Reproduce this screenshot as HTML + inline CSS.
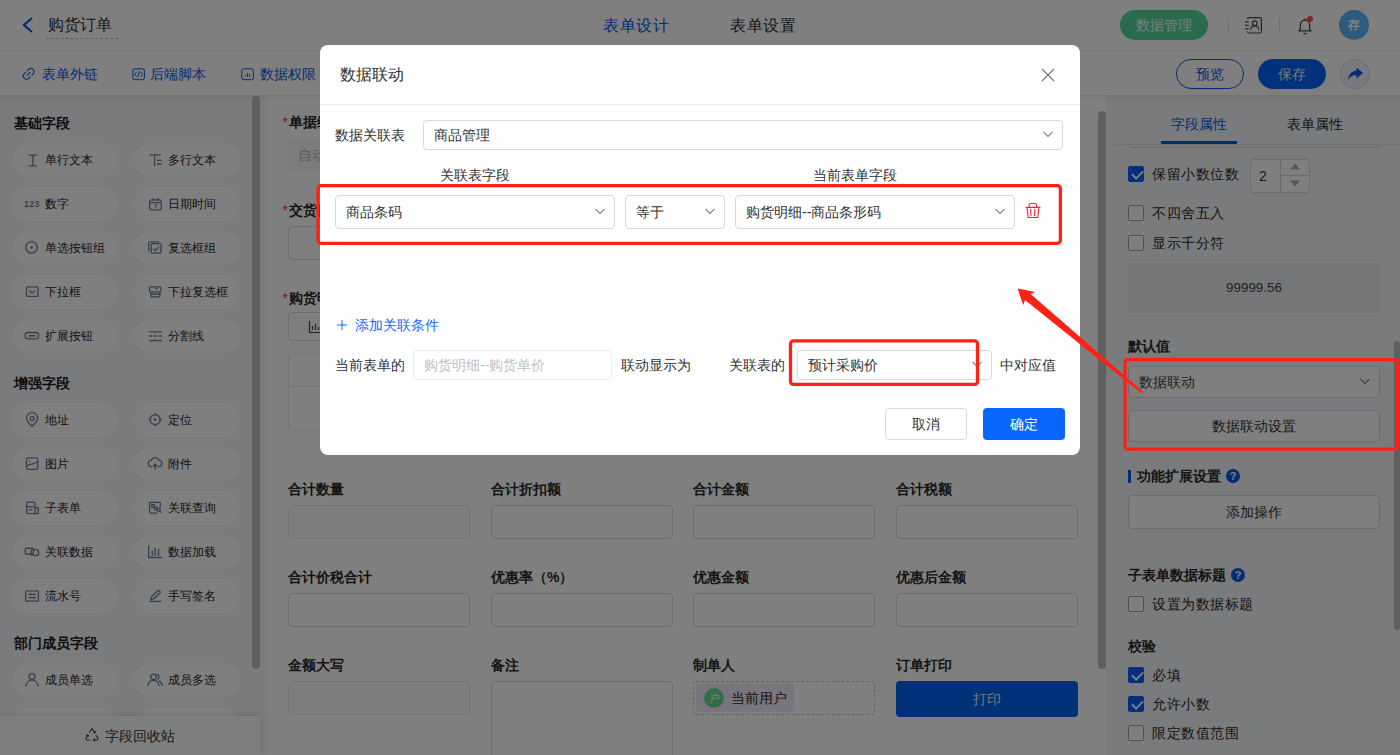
<!DOCTYPE html>
<html lang="zh">
<head>
<meta charset="utf-8">
<title>购货订单</title>
<style>
*{box-sizing:border-box;margin:0;padding:0}
html,body{width:1400px;height:755px;overflow:hidden;background:#fff}
body{font-family:"Liberation Sans",sans-serif;font-size:14px;color:#303133;position:relative}
.abs{position:absolute}
.t{position:absolute;white-space:nowrap;line-height:20px;height:20px}
.b{font-weight:bold}
/* base */
#hdr{left:0;top:0;width:1400px;height:51px;background:#fff;border-bottom:1px solid #f0f0f0}
#tb{left:0;top:51px;width:1400px;height:44px;background:#fff}
#left{left:0;top:95px;width:260px;height:660px;background:#f4f6f9}
#gap{left:260px;top:95px;width:8px;height:660px;background:#f4f6f9}
#center{left:268px;top:95px;width:838px;height:660px;background:#fff}
#right{left:1106px;top:95px;width:294px;height:660px;background:#f4f6f9}
.sb{position:absolute;background:#bfbfbf;border-radius:4px}
.pill{position:absolute;width:105px;height:34px;border-radius:17px;background:#fff;font-size:12px;line-height:34px;color:#1f2329;padding-left:33px;white-space:nowrap}
.pill svg{position:absolute;left:12px;top:9px;width:16px;height:16px;stroke:#6f7e9c;fill:none;stroke-width:1.3}
.sec{position:absolute;left:14px;font-weight:bold;font-size:14px;color:#1a1a1a;line-height:20px}
.lab{position:absolute;font-weight:bold;font-size:14px;color:#2b2b2b;line-height:20px;white-space:nowrap}
.inp{position:absolute;width:182px;height:34px;border:1px solid #d6d8dc;border-radius:4px;background:#fff}
.inp.dis{border-color:#e4e7ed;background:#fbfbfc}
.cb{position:absolute;left:1128px;width:16px;height:16px;border:1px solid #a0a0a0;border-radius:2px;background:#fff}
.cb.on{background:#0a5cff;border-color:#0a5cff}
.cb.on:after{content:"";position:absolute;left:4.5px;top:1px;width:5px;height:9px;border:solid #fff;border-width:0 2px 2px 0;transform:rotate(45deg)}
.cl{position:absolute;left:1152px;font-size:14px;line-height:20px;color:#2b2b2b;white-space:nowrap;letter-spacing:.55px}
.rbtn{position:absolute;left:1128px;width:252px;border:1px solid #d4d7de;border-radius:4px;background:#fff;text-align:center;font-size:14px;color:#333}
#mask{left:0;top:0;width:1400px;height:755px;background:rgba(0,0,0,.5)}
/* modal */
#modal{left:320px;top:45px;width:760px;height:410px;background:#fff;border-radius:8px}
.sel{position:absolute;border:1px solid #d9d9d9;border-radius:4px;background:#fff;font-size:14px;color:#303133;padding-left:10px;white-space:nowrap}
.sel svg{position:absolute;right:8.5px;top:50%;margin-top:-7px;width:12px;height:12px;stroke:#8a8a8a;fill:none;stroke-width:1.2}
</style>
</head>
<body>
<!-- ===== base page ===== -->
<div id="hdr" class="abs"></div>
<div id="tb" class="abs"></div>
<div id="left" class="abs"></div>
<div id="gap" class="abs"></div>
<div id="center" class="abs"></div>
<div id="right" class="abs"></div>
<!-- header -->
<svg class="abs" style="left:21px;top:16px;width:14px;height:18px" viewBox="0 0 14 18"><path d="M11 2 L3 9 L11 16" fill="none" stroke="#0a57e6" stroke-width="2.2"/></svg>
<div class="t" style="left:48px;top:15px;font-size:16px;color:#333">购货订单</div>
<div class="abs" style="left:46px;top:38px;width:72px;height:0;border-top:1px dashed #bdbdbd"></div>
<div class="t" style="left:603px;top:16px;font-size:16px;letter-spacing:.7px;color:#0a57e6">表单设计</div>
<div class="t" style="left:730px;top:16px;font-size:16px;letter-spacing:.7px;color:#333">表单设置</div>
<div class="abs" style="left:1120px;top:10px;width:88px;height:30px;border-radius:15px;background:#52d69a;color:#f2fff8;font-size:14px;line-height:30px;text-align:center">数据管理</div>
<div class="abs" style="left:1228px;top:18px;width:1px;height:14px;background:#dcdcdc"></div>
<div class="abs" style="left:1279px;top:18px;width:1px;height:14px;background:#dcdcdc"></div>
<svg class="abs" style="left:1244px;top:16px;width:20px;height:19px" viewBox="0 0 20 19" fill="none" stroke="#4d4d4d" stroke-width="1.200"><path d="M3.600 3.200V2.800a1.200 1.200 0 0 1 1.200-1.200h11.400a1.200 1.200 0 0 1 1.200 1.200v13a1.200 1.200 0 0 1-1.200 1.200H4.800a1.200 1.200 0 0 1-1.200-1.200v-.4"/><circle cx="10.700" cy="7.200" r="2.300"/><path d="M6.600 13.600c.4-2.500 2-3.800 4.100-3.800s3.700 1.300 4.100 3.800M1 5.800h3.600M1 9.300h3.600M1 12.800h3.600"/></svg>
<svg class="abs" style="left:1296px;top:15px;width:18px;height:20px" viewBox="0 0 18 20" fill="none" stroke="#4d4d4d" stroke-width="1.300"><path d="M2.300 15.800h13.400M3.200 15.800c1-1 1.200-2 1.200-3.300V9.600a4.600 4.600 0 0 1 9.200 0v2.900c0 1.300.2 2.300 1.200 3.300M7.300 18.600h3.400M9 5V3.300"/></svg>
<div class="abs" style="left:1307px;top:16px;width:6px;height:6px;border-radius:3px;background:#ff4d4f"></div>
<div class="abs" style="left:1339px;top:10px;width:30px;height:30px;border-radius:15px;background:#5db4ff;color:#fff;font-size:12px;font-weight:bold;line-height:30px;text-align:center">存</div>
<!-- toolbar -->
<svg class="abs" style="left:21px;top:67px;width:15px;height:14px" viewBox="0 0 15 14" fill="none" stroke="#0a57e6" stroke-width="1.050"><g transform="translate(7.700 6.900) rotate(-45)"><path d="M-.8-3.200H-3.100A3.200 3.200 0 0 0-3.100 3.200H-.8M.8-3.200H3.100A3.200 3.200 0 0 1 3.100 3.200H.8M-2.600 0H2.600"/></g></svg>
<div class="t" style="left:42px;top:64px;color:#0a57e6">表单外链</div>
<svg class="abs" style="left:131px;top:67px;width:15px;height:14px" viewBox="0 0 15 14" fill="none" stroke="#0a57e6" stroke-width="1"><rect x="1.800" y="1.800" width="11.600" height="10.900" rx="2"/><path d="M5.400 5 3.700 7.300l1.700 2.300M9.800 5l1.700 2.300-1.700 2.300M8.600 4.200l-2 6.200"/></svg>
<div class="t" style="left:150px;top:64px;color:#0a57e6">后端脚本</div>
<svg class="abs" style="left:240px;top:67px;width:15px;height:14px" viewBox="0 0 15 14" fill="none" stroke="#0a57e6" stroke-width="1"><rect x="1.800" y="1.800" width="11.600" height="10.900" rx="2"/><path d="M5.600 9.800V8.200M7.600 9.800V5.800M9.600 9.800V7.200"/></svg>
<div class="t" style="left:260px;top:64px;color:#0a57e6">数据权限</div>
<div class="abs" style="left:1176px;top:59px;width:68px;height:30px;border-radius:15px;border:1px solid #0a57e6;color:#0a57e6;font-size:14px;line-height:28px;text-align:center;background:#fff">预览</div>
<div class="abs" style="left:1258px;top:59px;width:68px;height:30px;border-radius:15px;background:#0062f5;color:#e8f0ff;font-size:14px;line-height:30px;text-align:center">保存</div>
<div class="abs" style="left:1340px;top:59px;width:30px;height:30px;border-radius:15px;background:#f0f5ff;border:1px solid #cfdcf7"></div>
<svg class="abs" style="left:1346px;top:66px;width:18px;height:16px" viewBox="0 0 18 16"><path d="M10.500 1.500 17 7l-6.500 5.500V9.200C6.500 9.200 3.800 10.600 2 14c.3-5 3.200-8.600 8.500-9.200z" fill="#0a57e6"/></svg>
<div class="abs" style="left:0;top:95px;width:1400px;height:5px;background:linear-gradient(rgba(0,0,0,.07),rgba(0,0,0,0))"></div>
<!--HDR_END-->
<div class="sec" style="top:113px">基础字段</div>
<div class="sec" style="top:373px">增强字段</div>
<div class="sec" style="top:633px">部门成员字段</div>
<div class="pill" style="left:12px;top:143px"><svg viewBox="0 0 16 16"><path d="M4.900 3.200h8M4.900 13.800h8M8.900 3.200v10.600"/></svg>单行文本</div>
<div class="pill" style="left:135px;top:143px"><svg viewBox="0 0 16 16"><path d="M2.500 2.800h11.400M7.600 2.800v11.400M10 8.300h4.600M10 12h4.600"/></svg>多行文本</div>
<div class="pill" style="left:12px;top:187px"><span style="position:absolute;left:12px;top:0;font-size:9px;font-weight:bold;color:#6f7e9c;letter-spacing:.3px">123</span>数字</div>
<div class="pill" style="left:135px;top:187px"><svg viewBox="0 0 16 16"><rect x="2.700" y="3.900" width="11.600" height="10" rx="1.800"/><path d="M6.200 2.300v2.600M11.100 2.300v2.600M2.700 6.600h11.600" /><path d="M7.200 8.700h2.600l-1.500 3.600" stroke-width="1"/></svg>日期时间</div>
<div class="pill" style="left:12px;top:231px"><svg viewBox="0 0 16 16"><circle cx="7.600" cy="7.400" r="5.700"/><circle cx="7.600" cy="7.400" r="1.300" fill="#6f7e9c" stroke="none"/></svg>单选按钮组</div>
<div class="pill" style="left:135px;top:231px"><svg viewBox="0 0 16 16"><rect x="4.200" y="3.600" width="9.900" height="9.500" rx="1.200"/><path d="M6.300 8.700l2 2 3.800-4.300M1.700 11.600V2.900a1.100 1.100 0 0 1 1.100-1.100h9.500"/></svg>复选框组</div>
<div class="pill" style="left:12px;top:275px"><svg viewBox="0 0 16 16"><rect x="2.500" y="2.900" width="11.500" height="9.500" rx="1"/><path d="M5.300 6.500l2.900 2.700 2.900-2.700"/></svg>下拉框</div>
<div class="pill" style="left:135px;top:275px"><svg viewBox="0 0 16 16"><rect x="2.500" y="2.900" width="11.500" height="5" rx="1.200"/><path d="M7.600 3.900h3.600l-1.800 1.900z" fill="#6f7e9c" stroke="none"/><path d="M3.600 8v3.300a1.600 1.600 0 0 0 1.600 1.600h6.100a1.600 1.600 0 0 0 1.600-1.600V8M3.600 10h9.300"/></svg>下拉复选框</div>
<div class="pill" style="left:12px;top:319px"><svg viewBox="0 0 16 16"><rect x="1" y="4.500" width="13.600" height="6.400" rx="3.200"/><path d="M4.600 7.700h6.800" stroke-width="1.600"/></svg>扩展按钮</div>
<div class="pill" style="left:135px;top:319px"><svg viewBox="0 0 16 16"><path d="M2.200 3.900h12.700M2.200 12.500h12.700"/><path d="M2.200 8h12.700" stroke-dasharray="3.200 1.500"/></svg>分割线</div>
<div class="pill" style="left:12px;top:403px"><svg viewBox="0 0 16 16"><path d="M8.100 14.400C5 11.500 2.500 9.200 2.500 6.300a5.600 5.600 0 0 1 11.200 0c0 2.900-2.500 5.200-5.600 8.100z"/><circle cx="8.100" cy="6.600" r="2"/></svg>地址</div>
<div class="pill" style="left:135px;top:403px"><svg viewBox="0 0 16 16"><circle cx="8.100" cy="7.600" r="5"/><circle cx="8.100" cy="7.600" r="1.300" fill="#6f7e9c" stroke="none"/><path d="M8.100 1v2.600M8.100 11.600v2.600M1.500 7.600h2.600M12.100 7.600h2.600"/></svg>定位</div>
<div class="pill" style="left:12px;top:447px"><svg viewBox="0 0 16 16"><rect x="2.400" y="1.900" width="11.400" height="11.400" rx="2"/><path d="M3 10.400c2-2 3.400-2 5-2.300s3.200-1 5-2.300M4.600 5.200h1.500"/></svg>图片</div>
<div class="pill" style="left:135px;top:447px"><svg viewBox="0 0 16 16"><path d="M5.400 10.600H4.700a3.100 3.100 0 0 1-.5-6.200 4.100 4.100 0 0 1 7.800 0 3.100 3.100 0 0 1-.5 6.200h-.7M8.100 13.700V8.300M6 10.300l2.100-2.100 2.100 2.100"/></svg>附件</div>
<div class="pill" style="left:12px;top:491px"><svg viewBox="0 0 16 16"><rect x="2.700" y="2.100" width="8.300" height="11.500" rx="1"/><path d="M2.700 6.900H11M4.600 9.800h3.800M11 8h3.300v5.600H11"/></svg>子表单</div>
<div class="pill" style="left:135px;top:491px"><svg viewBox="0 0 16 16"><path d="M13.400 7.500V3.300a1 1 0 0 0-1-1H3.600a1 1 0 0 0-1 1v8.800a1 1 0 0 0 1 1h6.900"/><rect x="4.800" y="4.600" width="2.600" height="2.600"/><rect x="7.400" y="7.200" width="2.400" height="2.400"/><circle cx="11.500" cy="9.800" r="1.600"/><path d="M12.700 11l1.700 1.800"/></svg>关联查询</div>
<div class="pill" style="left:12px;top:535px"><svg viewBox="0 0 16 16"><rect x="1.300" y="4.200" width="8.100" height="6" rx="1.800" stroke-width="1.400"/><rect x="7" y="5.600" width="7.500" height="5.800" rx="1.800" stroke-width="1.400"/></svg>关联数据</div>
<div class="pill" style="left:135px;top:535px"><svg viewBox="0 0 16 16"><path d="M1.600 1.400v12.100h13.300M5.300 12V6.500M8.100 12V3.700M11.500 12V4.700"/></svg>数据加载</div>
<div class="pill" style="left:12px;top:579px"><svg viewBox="0 0 16 16"><rect x="1.700" y="2.900" width="12.700" height="10.300" rx="1"/><path d="M4.800 6.400h7.100M4.800 9.700h7.100M6.800 5.300v2.200M9.900 8.600v2.200"/></svg>流水号</div>
<div class="pill" style="left:135px;top:579px"><svg viewBox="0 0 16 16"><path d="M3.800 11.600l1-3.200 6.200-5.600c.5-.4 1.100-.4 1.500.1l.6.700c.4.500.3 1.100-.1 1.500L6.900 10.600zM2.400 13.400h12.100"/></svg>手写签名</div>
<div class="pill" style="left:12px;top:663px"><svg viewBox="0 0 16 16"><circle cx="8" cy="4.600" r="3"/><path d="M1.700 14.600c.3-4 3-6.400 6.300-6.400s6 2.400 6.300 6.400"/></svg>成员单选</div>
<div class="pill" style="left:135px;top:663px"><svg viewBox="0 0 16 16"><circle cx="6.500" cy="4.900" r="2.800"/><path d="M1 14c.3-3.600 2.500-5.600 5.500-5.600s5.200 2 5.500 5.600M9.800 2.200a2.800 2.800 0 0 1 .6 5.200M12 8.900c1.800.7 3 2.400 3.300 5.100"/></svg>成员多选</div>
<div class="pill" style="left:12px;top:707px"></div>
<div class="pill" style="left:135px;top:707px"></div>
<div class="sb" style="left:252px;top:96px;width:8px;height:573px"></div>
<div class="abs" style="left:0;top:716px;width:260px;height:39px;background:#fbfcfd;box-shadow:0 -2px 6px rgba(0,0,0,.09)"></div>
<svg class="abs" style="left:84px;top:727px;width:16px;height:16px" viewBox="0 0 16 16" fill="none" stroke="#444" stroke-width="1.100"><path d="M5.200 5.800 8 1.500l2.800 4.300M9.300 5.300l1.700.6.300-1.800M12 8l2 3.500c.3.800-.2 1.500-1 1.500H9.500M10.800 11.700 9.500 13l1.300 1.300M6.500 13H3c-.8 0-1.300-.700-1-1.500L4 8M2.400 8.600 4 8l.6 1.600"/></svg>
<div class="t" style="left:105px;top:726px;font-size:14px;color:#333">字段回收站</div>
<!--LEFT_END-->
<div class="lab" style="left:289px;top:112px"><span style="position:absolute;left:-6.500px;top:0;color:#f5222d;font-weight:normal">*</span>单据编号</div>
<div class="inp dis" style="left:288px;top:138px;height:34px;background:#f8f9fa;border-color:#f8f9fa"></div>
<div class="t" style="left:298px;top:145px;font-size:14px;color:#b4b8c0">自动生成</div>
<div class="lab" style="left:289px;top:200px"><span style="position:absolute;left:-6.500px;top:0;color:#f5222d;font-weight:normal">*</span>交货日期</div>
<div class="inp" style="left:288px;top:226px;height:34px"></div>
<div class="lab" style="left:289px;top:288px"><span style="position:absolute;left:-6.500px;top:0;color:#f5222d;font-weight:normal">*</span>购货明细</div>
<div class="abs" style="left:288px;top:312px;width:90px;height:29px;border:1px solid #d6d8dc;border-radius:4px"></div>
<svg class="abs" style="left:308px;top:320px;width:14px;height:14px" viewBox="0 0 14 14" fill="none" stroke="#444" stroke-width="1.200"><path d="M1.500 1v11.500H13M4.500 10V6M7.500 10V4M10.500 10V7"/></svg>
<div class="abs" style="left:288px;top:353px;width:790px;height:78px;border:1px solid #e6e8ec;border-radius:3px"></div>
<div class="abs" style="left:288px;top:386px;width:790px;height:1px;background:#e6e8ec"></div>
<div class="lab" style="left:288px;top:479px">合计数量</div>
<div class="inp dis" style="left:288px;top:505px"></div>
<div class="lab" style="left:491px;top:479px">合计折扣额</div>
<div class="inp" style="left:491px;top:505px"></div>
<div class="lab" style="left:693px;top:479px">合计金额</div>
<div class="inp" style="left:693px;top:505px"></div>
<div class="lab" style="left:896px;top:479px">合计税额</div>
<div class="inp" style="left:896px;top:505px"></div>
<div class="lab" style="left:288px;top:567px">合计价税合计</div>
<div class="inp" style="left:288px;top:593px"></div>
<div class="lab" style="left:491px;top:567px">优惠率（%）</div>
<div class="inp" style="left:491px;top:593px"></div>
<div class="lab" style="left:693px;top:567px">优惠金额</div>
<div class="inp" style="left:693px;top:593px"></div>
<div class="lab" style="left:896px;top:567px">优惠后金额</div>
<div class="inp" style="left:896px;top:593px"></div>
<div class="lab" style="left:288px;top:655px">金额大写</div>
<div class="inp dis" style="left:288px;top:681px"></div>
<div class="lab" style="left:491px;top:655px">备注</div>
<div class="inp" style="left:491px;top:681px;height:90px"></div>
<div class="lab" style="left:693px;top:655px">制单人</div>
<div class="abs" style="left:693px;top:681px;width:182px;height:34px;border:1px dashed #c4c4c4;border-radius:3px"></div>
<div class="abs" style="left:696px;top:684px;width:98px;height:28px;border-radius:3px;background:#f3e9fc"></div>
<div class="abs" style="left:704px;top:688px;width:20px;height:20px;border-radius:10px;background:#69dc93;color:#f0fff5;font-size:11px;line-height:20px;text-align:center">户</div>
<div class="t" style="left:731px;top:688px;font-size:14px;color:#2b2b2b">当前用户</div>
<div class="lab" style="left:896px;top:655px">订单打印</div>
<div class="abs" style="left:896px;top:681px;width:182px;height:36px;border-radius:4px;background:#0060f0;color:#e6eeff;font-size:14px;line-height:36px;text-align:center">打印</div>
<div class="sb" style="left:1098px;top:111px;width:8px;height:558px"></div>
<!--CENTER_END-->
<div class="t" style="left:1171px;top:114px;font-size:14px;color:#0a57e6">字段属性</div>
<div class="t" style="left:1287px;top:114px;font-size:14px;color:#2b2b2b">表单属性</div>
<div class="abs" style="left:1114px;top:144px;width:286px;height:1px;background:#dfe2e8"></div>
<div class="abs" style="left:1161px;top:141px;width:76px;height:3px;background:#0a57e6"></div>
<div class="abs" style="left:1128px;top:120px;width:252px;height:28px;border:1px solid #d4d7de;border-radius:4px;clip-path:inset(25px 0 0 0)"></div>
<div class="cb on" style="top:166px"></div><div class="cl" style="top:164px">保留小数位数</div>
<div class="abs" style="left:1250px;top:159px;width:60px;height:34px;border:1px solid #d4d7de;border-radius:4px;background:#fff"></div>
<div class="abs" style="left:1280px;top:160px;width:1px;height:32px;background:#d4d7de"></div>
<div class="abs" style="left:1280px;top:175px;width:29px;height:1px;background:#d4d7de"></div>
<div class="t" style="left:1259px;top:166px;font-size:14px;color:#333">2</div>
<svg class="abs" style="left:1289px;top:163px;width:12px;height:7px" viewBox="0 0 12 7"><path d="M6 .5 11 6.500H1z" fill="#adadad"/></svg>
<svg class="abs" style="left:1289px;top:179.500px;width:12px;height:7px" viewBox="0 0 12 7"><path d="M6 6.500 11 .5H1z" fill="#adadad"/></svg>
<div class="cb" style="top:205px"></div><div class="cl" style="top:203px">不四舍五入</div>
<div class="cb" style="top:235px"></div><div class="cl" style="top:233px">显示千分符</div>
<div class="abs" style="left:1128px;top:263px;width:252px;height:50px;border-radius:3px;background:#ebedf0;text-align:center;line-height:50px;font-size:13.400px;color:#444">99999.56</div>
<div class="lab" style="left:1128px;top:336px">默认值</div>
<div class="sel" style="left:1128px;top:366px;width:252px;height:32px;line-height:30px;color:#444;border-color:#d4d7de">数据联动<svg viewBox="0 0 12 12"><path d="M1.500 4l4.500 4.500L10.500 4"/></svg></div>
<div class="rbtn" style="top:410px;height:32px;line-height:30px">数据联动设置</div>
<div class="abs" style="left:1128px;top:470px;width:3px;height:13px;background:#0a57e6"></div>
<div class="lab" style="left:1137px;top:466px">功能扩展设置</div>
<div class="abs" style="left:1226px;top:469px;width:14px;height:14px;border-radius:7px;background:#0a57e6;color:#fff;font-size:11px;font-weight:bold;line-height:14px;text-align:center">?</div>
<div class="rbtn" style="top:495px;height:34px;line-height:32px">添加操作</div>
<div class="lab" style="left:1128px;top:565px">子表单数据标题</div>
<div class="abs" style="left:1231px;top:568px;width:14px;height:14px;border-radius:7px;background:#0a57e6;color:#fff;font-size:11px;font-weight:bold;line-height:14px;text-align:center">?</div>
<div class="cb" style="top:596px"></div><div class="cl" style="top:594px">设置为数据标题</div>
<div class="lab" style="left:1128px;top:636px">校验</div>
<div class="cb on" style="top:667px"></div><div class="cl" style="top:665px">必填</div>
<div class="cb on" style="top:696px"></div><div class="cl" style="top:694px">允许小数</div>
<div class="cb" style="top:725px"></div><div class="cl" style="top:723px">限定数值范围</div>
<div class="sb" style="left:1394px;top:341px;width:6px;height:289px;border-radius:3px"></div>
<!--RIGHT_END-->
<div id="mask" class="abs"></div>
<div id="modal" class="abs"></div>
<div class="t" style="left:340px;top:65px;font-size:16px;color:#303133">数据联动</div>
<svg class="abs" style="left:1040.500px;top:68px;width:14px;height:14px" viewBox="0 0 14 14"><path d="M1 1l12 12M13 1 1 13" stroke="#757575" stroke-width="1.200" fill="none"/></svg>
<div class="abs" style="left:320px;top:104px;width:760px;height:1px;background:#ececec"></div>
<div class="t" style="left:335px;top:125px;font-size:14px;color:#303133">数据关联表</div>
<div class="sel" style="left:423px;top:120px;width:640px;height:30px;line-height:28px">商品管理<svg viewBox="0 0 12 12"><path d="M1.500 4l4.500 4.500L10.500 4"/></svg></div>
<div class="t" style="left:440px;top:165px;font-size:14px;color:#303133">关联表字段</div>
<div class="t" style="left:813px;top:165px;font-size:14px;color:#303133">当前表单字段</div>
<div class="sel" style="left:335px;top:195px;width:280px;height:34px;line-height:32px">商品条码<svg viewBox="0 0 12 12"><path d="M1.500 4l4.500 4.500L10.500 4"/></svg></div>
<div class="sel" style="left:625px;top:195px;width:100px;height:34px;line-height:32px">等于<svg viewBox="0 0 12 12"><path d="M1.500 4l4.500 4.500L10.500 4"/></svg></div>
<div class="sel" style="left:735px;top:195px;width:280px;height:34px;line-height:32px">购货明细--商品条形码<svg viewBox="0 0 12 12"><path d="M1.500 4l4.500 4.500L10.500 4"/></svg></div>
<svg class="abs" style="left:1025px;top:202px;width:16px;height:17px" viewBox="0 0 16 17" fill="none" stroke="#f5222d" stroke-width="1.1" stroke-linecap="round"><path d="M.9 5.400H15M4.100 5.400V3a1.500 1.500 0 0 1 1.500-1.500h4.400a1.500 1.500 0 0 1 1.500 1.500v2.400M2.100 5.400l1.100 10.100h9.500L14 5.400M5.600 7.300 6 13.600M9.900 7.300l-.4 6.300"/></svg>
<svg class="abs" style="left:337px;top:320px;width:10px;height:10px" viewBox="0 0 10 10"><path d="M5 0v10M0 5h10" stroke="#1668ff" stroke-width="1"/></svg>
<div class="t" style="left:355px;top:315px;font-size:14px;color:#1668ff">添加关联条件</div>
<div class="t" style="left:335px;top:355px;font-size:14px;color:#303133">当前表单的</div>
<div class="sel" style="left:413px;top:350px;width:199px;height:30px;line-height:28px;border-color:#ededed;color:#bfbfbf">购货明细--购货单价</div>
<div class="t" style="left:621px;top:355px;font-size:14px;color:#303133">联动显示为</div>
<div class="t" style="left:729px;top:355px;font-size:14px;color:#303133">关联表的</div>
<div class="sel" style="left:797px;top:350px;width:195px;height:30px;line-height:28px">预计采购价<svg viewBox="0 0 12 12"><path d="M1.500 4l4.500 4.500L10.500 4"/></svg></div>
<div class="t" style="left:1000px;top:355px;font-size:14px;color:#303133">中对应值</div>
<div class="abs" style="left:885px;top:408px;width:82px;height:32px;border:1px solid #d9d9d9;border-radius:4px;background:#fff;text-align:center;line-height:30px;font-size:14px;color:#303133">取消</div>
<div class="abs" style="left:983px;top:408px;width:82px;height:32px;border-radius:4px;background:#0866ff;text-align:center;line-height:32px;font-size:14px;color:#fff">确定</div>
<!--MODAL_END-->
<svg class="abs" style="left:0;top:0;width:1400px;height:755px" viewBox="0 0 1400 755">
<g fill="none" stroke="#ff2114" stroke-width="3.300">
<rect x="318" y="185.600" width="742.400" height="57.700" rx="3"/>
<rect x="790.500" y="340.800" width="187" height="43.600" rx="3"/>
<rect x="1125" y="359.600" width="272.300" height="89.600" rx="3"/>
</g>
<path d="M1017.600 288.600 L1035.300 291.900 L1030.600 294.100 L1143.100 391.800 L1141.500 393.600 L1025 300 L1023.200 305.300 Z" fill="#ff2114"/>
</svg>
<!--ANNO_END-->
</body>
</html>
